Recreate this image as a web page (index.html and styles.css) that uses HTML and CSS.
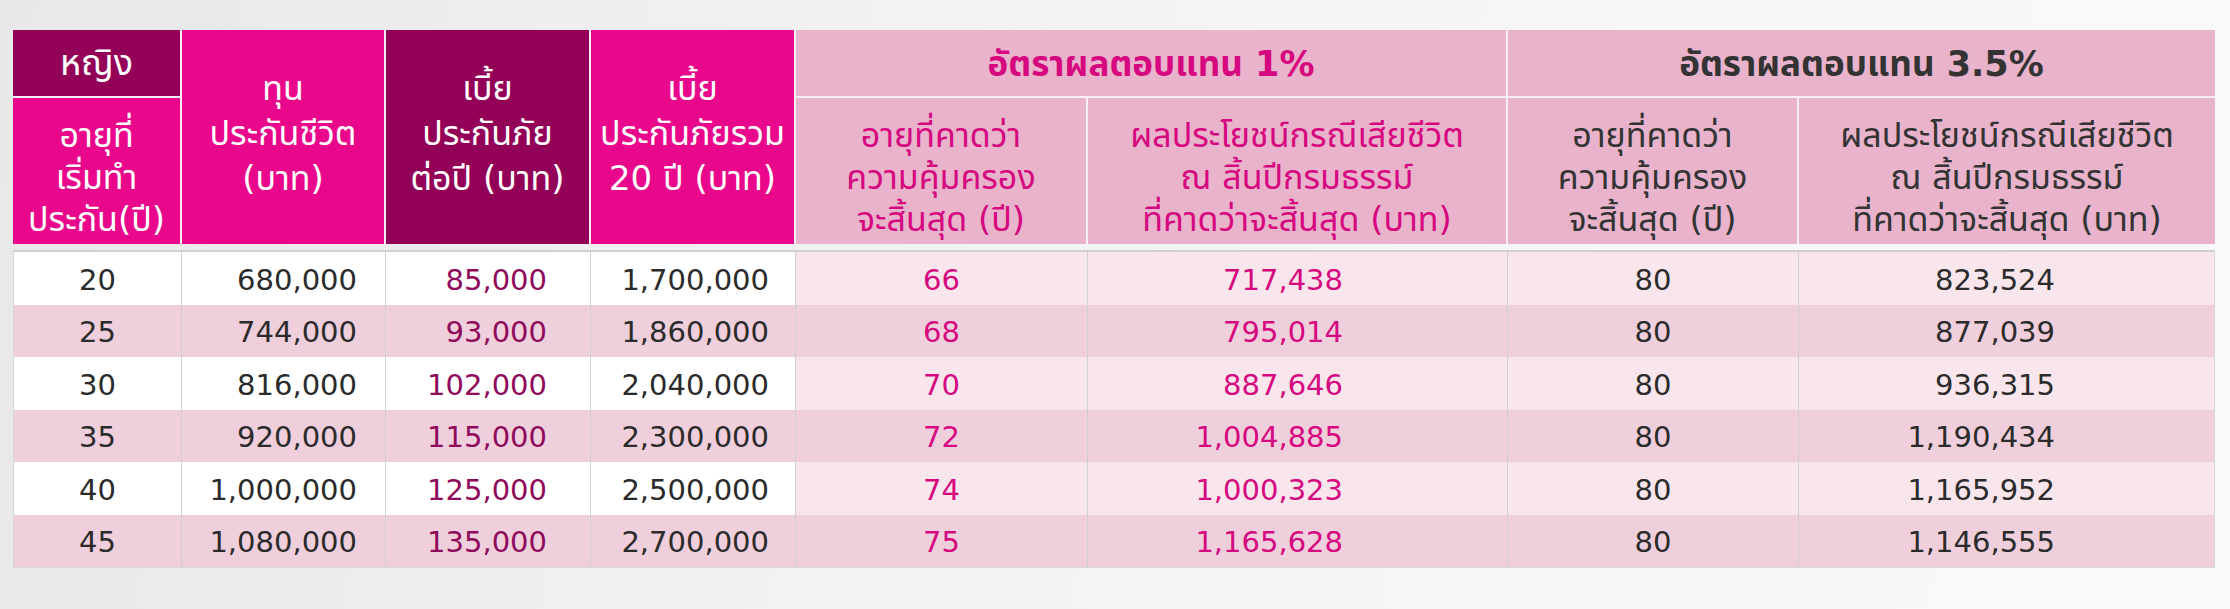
FILE: index.html
```html
<!DOCTYPE html>
<html lang="th">
<head>
<meta charset="utf-8">
<title>ตารางผลประโยชน์</title>
<link rel="stylesheet" href="styles.css">
</head>
<body>
<div class="page">
  <div class="sheet">
    <div class="head">
      <div class="h dark c1 r1 big">หญิง</div>
      <div class="h pink c1 r2 low">อายุที่<br>เริ่มทำ<br>ประกัน(ปี)</div>
      <div class="h pink c2 rs">ทุน<br>ประกันชีวิต<br>(บาท)</div>
      <div class="h dark c3 rs">เบี้ย<br>ประกันภัย<br>ต่อปี (บาท)</div>
      <div class="h pink c4 rs">เบี้ย<br>ประกันภัยรวม<br>20 ปี (บาท)</div>
      <div class="h light accent title g1">อัตราผลตอบแทน 1%</div>
      <div class="h light title g2">อัตราผลตอบแทน 3.5%</div>
      <div class="h light accent c5 r2 low">อายุที่คาดว่า<br>ความคุ้มครอง<br>จะสิ้นสุด (ปี)</div>
      <div class="h light accent c6 r2 low">ผลประโยชน์กรณีเสียชีวิต<br>ณ สิ้นปีกรมธรรม์<br>ที่คาดว่าจะสิ้นสุด (บาท)</div>
      <div class="h light c7 r2 low">อายุที่คาดว่า<br>ความคุ้มครอง<br>จะสิ้นสุด (ปี)</div>
      <div class="h light c8 r2 low">ผลประโยชน์กรณีเสียชีวิต<br>ณ สิ้นปีกรมธรรม์<br>ที่คาดว่าจะสิ้นสุด (บาท)</div>
    </div>
    <div class="body">
      <div class="row">
        <div class="d center">20</div><div class="d num n2">680,000</div><div class="d num n3 plum">85,000</div><div class="d num n4">1,700,000</div>
        <div class="d center soft magenta">66</div><div class="d num n6 soft magenta">717,438</div><div class="d center soft">80</div><div class="d num n8 soft">823,524</div>
      </div>
      <div class="row alt">
        <div class="d center">25</div><div class="d num n2">744,000</div><div class="d num n3 plum">93,000</div><div class="d num n4">1,860,000</div>
        <div class="d center soft magenta">68</div><div class="d num n6 soft magenta">795,014</div><div class="d center soft">80</div><div class="d num n8 soft">877,039</div>
      </div>
      <div class="row">
        <div class="d center">30</div><div class="d num n2">816,000</div><div class="d num n3 plum">102,000</div><div class="d num n4">2,040,000</div>
        <div class="d center soft magenta">70</div><div class="d num n6 soft magenta">887,646</div><div class="d center soft">80</div><div class="d num n8 soft">936,315</div>
      </div>
      <div class="row alt">
        <div class="d center">35</div><div class="d num n2">920,000</div><div class="d num n3 plum">115,000</div><div class="d num n4">2,300,000</div>
        <div class="d center soft magenta">72</div><div class="d num n6 soft magenta">1,004,885</div><div class="d center soft">80</div><div class="d num n8 soft">1,190,434</div>
      </div>
      <div class="row">
        <div class="d center">40</div><div class="d num n2">1,000,000</div><div class="d num n3 plum">125,000</div><div class="d num n4">2,500,000</div>
        <div class="d center soft magenta">74</div><div class="d num n6 soft magenta">1,000,323</div><div class="d center soft">80</div><div class="d num n8 soft">1,165,952</div>
      </div>
      <div class="row alt">
        <div class="d center">45</div><div class="d num n2">1,080,000</div><div class="d num n3 plum">135,000</div><div class="d num n4">2,700,000</div>
        <div class="d center soft magenta">75</div><div class="d num n6 soft magenta">1,165,628</div><div class="d center soft">80</div><div class="d num n8 soft">1,146,555</div>
      </div>
    </div>
  </div>
</div>
</body>
</html>
```

FILE: styles.css
```css
html, body {
  margin: 0;
  padding: 0;
}
body {
  width: 2230px;
  height: 609px;
  overflow: hidden;
  background: linear-gradient(100deg, #e8e8e8 0%, #f1f1f1 35%, #f7f7f7 70%, #f9f9f9 100%);
  font-family: "DejaVu Sans", "Noto Sans Thai", "Noto Sans", sans-serif;
}
.page {
  padding: 30px 0 0 13px;
}
.sheet {
  width: 2202px;
}
.head {
  display: grid;
  grid-template-columns: 167px 202px 203px 203px 290px 418px 289px 416px;
  grid-template-rows: 66px 146px;
  gap: 2px;
  background: #f6eef2;
}
.h {
  display: flex;
  align-items: center;
  justify-content: center;
  text-align: center;
  font-size: 34px;
  line-height: 42px;
  color: #ffffff;
  box-sizing: border-box;
}
.big { font-size: 36px; }
.low { padding-top: 12px; }
.rs { line-height: 45px; padding-bottom: 8px; }
.dark { background: #930057; }
.pink { background: #e9078b; }
.light { background: #e8b3cb; color: #333333; }
.accent { color: #d6087f; }
.title { font-size: 35px; font-weight: bold; padding-top: 2px; }
.c1 { grid-column: 1; }
.c2 { grid-column: 2; }
.c3 { grid-column: 3; }
.c4 { grid-column: 4; }
.c5 { grid-column: 5; }
.c6 { grid-column: 6; }
.c7 { grid-column: 7; }
.c8 { grid-column: 8; }
.r1 { grid-row: 1; }
.r2 { grid-row: 2; }
.rs { grid-row: 1 / span 2; }
.g1 { grid-column: 5 / span 2; grid-row: 1; }
.g2 { grid-column: 7 / span 2; grid-row: 1; }

.body {
  margin-top: 6px;
  border: 1px solid #d6d6d6;
  border-top: 2px solid #d0d0d0;
  background: #ffffff;
}
.row {
  display: grid;
  grid-template-columns: 168px 204px 205px 205px 292px 420px 291px 415px;
  height: 52.5px;
  background: #ffffff;
}
.row.alt { background: #f0cfdc; }
.d {
  display: flex;
  align-items: center;
  border-right: 1px solid #d0d0d0;
  font-size: 29px;
  color: #2b2b2b;
  padding-top: 3px;
  box-sizing: border-box;
}
.d:last-child { border-right: none; }
.center { justify-content: center; }
.num { justify-content: flex-end; }
.n2 { padding-right: 28px; }
.n3 { padding-right: 43px; }
.n4 { padding-right: 26px; }
.n6 { padding-right: 164px; }
.n8 { padding-right: 159px; }
.soft { background: #f9e6ed; }
.row.alt .soft { background: #f0cfdc; }
.plum { color: #8f0a5a; }
.magenta { color: #d6087f; }
```
